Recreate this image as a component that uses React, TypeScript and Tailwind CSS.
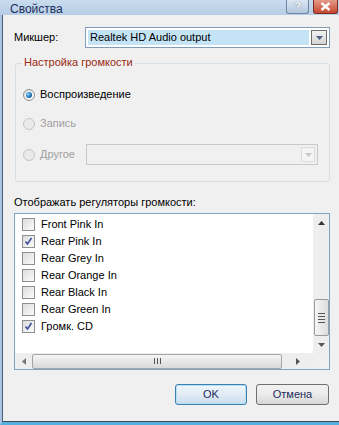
import React from 'react';

const items = [
  { label: 'Front Pink In', checked: false },
  { label: 'Rear Pink In', checked: true },
  { label: 'Rear Grey In', checked: false },
  { label: 'Rear Orange In', checked: false },
  { label: 'Rear Black In', checked: false },
  { label: 'Rear Green In', checked: false },
  { label: 'Громк. CD', checked: true },
];

function Arrow({ dir, color = '#4d6185' }: { dir: 'up' | 'down' | 'left' | 'right'; color?: string }) {
  const pts = {
    down: '0,0 7,0 3.5,4',
    up: '0,4 7,4 3.5,0',
    left: '4,0 4,7 0,3.5',
    right: '0,0 0,7 4,3.5',
  }[dir];
  const w = dir === 'up' || dir === 'down' ? 7 : 4;
  const h = dir === 'up' || dir === 'down' ? 4 : 7;
  return (
    <svg width={w} height={h} viewBox={`0 0 ${w} ${h}`}>
      <polygon points={pts} fill={color} />
    </svg>
  );
}

function Radio({ checked, disabled, label }: { checked?: boolean; disabled?: boolean; label: string }) {
  return (
    <div className="flex items-center gap-[5px] h-[13px]">
      <div
        className={`w-[12px] h-[12px] rounded-full border flex items-center justify-center ${
          disabled ? 'border-[#c5c5c5] bg-[#eaeaea]' : 'border-[#8e8f8f] bg-gradient-to-br from-[#e0e0e0] to-[#ffffff]'
        }`}
      >
        {checked && (
          <div className="w-[6px] h-[6px] rounded-full bg-[radial-gradient(circle_at_35%_35%,#8fd3ff,#1a6fb0_60%,#0d3e6c)]" />
        )}
      </div>
      <span className={disabled ? 'text-[#a0a0a0]' : 'text-black'}>{label}</span>
    </div>
  );
}

function Check({ checked }: { checked: boolean }) {
  return (
    <div className="w-[13px] h-[13px] border border-[#8e8f8f] bg-gradient-to-br from-[#dcdcdc] to-[#fbfbfb] flex items-center justify-center">
      {checked && (
        <svg width="9" height="9" viewBox="0 0 9 9">
          <path d="M1.5 4.5 L3.5 7 L7.5 1" stroke="#3c4fa0" strokeWidth="1.6" fill="none" />
        </svg>
      )}
    </div>
  );
}

export default function App() {
  return (
    <div
      className="w-[339px] h-[425px] bg-[#f0f0f0] flex flex-col text-[11px] leading-none overflow-hidden"
      style={{ fontFamily: '"Liberation Sans", Arial, sans-serif' }}
    >
      {/* Title bar */}
      <div className="h-[15px] bg-gradient-to-b from-[#c9dcef] to-[#b6cde6] flex items-start shrink-0">
        <span className="pl-[10px] pt-[3px] text-[12px] text-[#1d2f5a]">Свойства</span>
        <div className="ml-auto flex gap-[4px] mr-[1px]">
          <div className="w-[23px] h-[14px] rounded-b-[3px] border border-t-0 border-[#6e84a3] bg-gradient-to-b from-[#dbe6f2] to-[#b3c7de] flex items-center justify-center text-[11px] font-bold text-white [text-shadow:0_0_1px_#3b4f6e]">
            ?
          </div>
          <div className="w-[25px] h-[14px] rounded-b-[3px] border border-t-0 border-[#7a2a20] bg-gradient-to-b from-[#e49a88] to-[#c4452e] flex items-center justify-center">
            <svg width="11" height="9" viewBox="0 0 11 9">
              <path d="M1.5 1 L9.5 8 M9.5 1 L1.5 8" stroke="#ffffff" strokeWidth="2.4" />
            </svg>
          </div>
        </div>
      </div>

      {/* Body */}
      <div className="flex-1 flex border-l-[2px] border-[#a9c4e0] border-b-[3px] border-b-[#56b0de]">
        <div className="flex-1 flex flex-col border-l border-[#4a5f77] border-b border-b-[#3a4b5c] pl-[11px] pr-[9px]">
          {/* Mixer row */}
          <div className="flex items-center mt-[12px] h-[21px]">
            <span className="w-[71px]">Микшер:</span>
            <div className="flex-1 h-[21px] border border-[#7f9db9] bg-white flex items-stretch p-[2px] gap-[2px]">
              <div className="flex-1 bg-[#c4e4f6] flex items-center pl-[2px] text-black">Realtek HD Audio output</div>
              <div className="w-[16px] border border-[#6c6c6c] bg-gradient-to-b from-[#f2f2f2] to-[#d4d4d4] flex items-center justify-center">
                <Arrow dir="down" />
              </div>
            </div>
          </div>

          {/* Group box */}
          <div className="relative mt-[15px] ml-[1px] h-[119px] border border-[#d5dfe5] rounded-[3px] pl-[7px] pt-[24px]">
            <span className="absolute left-[6px] top-[-7px] px-[2px] bg-[#f0f0f0] text-[#9b2a12]">Настройка громкости</span>
            <div className="flex flex-col">
              <Radio checked label="Воспроизведение" />
              <div className="mt-[16px]">
                <Radio disabled label="Запись" />
              </div>
              <div className="mt-[14px] flex items-center h-[21px]">
                <div className="w-[63px]">
                  <Radio disabled label="Другое" />
                </div>
                <div className="w-[232px] h-[21px] border border-[#c9c9c9] bg-[#f0f0f0] flex justify-end p-[2px]">
                  <div className="w-[14px] border border-[#dcdcdc] bg-[#f4f4f4] flex items-center justify-center">
                    <Arrow dir="down" color="#c8c8c8" />
                  </div>
                </div>
              </div>
            </div>
          </div>

          <div className="mt-[15px]">Отображать регуляторы громкости:</div>

          {/* List box */}
          <div className="mt-[5px] h-[157px] border border-[#82a4c4] bg-white flex flex-col">
            <div className="flex-1 flex min-h-0">
              <div className="flex-1 flex flex-col pl-[7px] pt-[2px]">
                {items.map((it) => (
                  <div key={it.label} className="h-[17px] flex items-center gap-[6px]">
                    <Check checked={it.checked} />
                    <span className="text-black">{it.label}</span>
                  </div>
                ))}
              </div>
              {/* Vertical scrollbar */}
              <div className="w-[16px] bg-[#eeeeee] flex flex-col items-center">
                <div className="h-[17px] flex items-center justify-center">
                  <Arrow dir="up" color="#333333" />
                </div>
                <div className="flex-1" />
                <div className="w-[15px] h-[37px] border border-[#9a9a9a] rounded-[2px] bg-gradient-to-r from-[#f5f5f5] to-[#dddddd] flex flex-col items-center justify-center gap-[2px]">
                  <div className="w-[7px] h-[1px] bg-[#555]" />
                  <div className="w-[7px] h-[1px] bg-[#555]" />
                  <div className="w-[7px] h-[1px] bg-[#555]" />
                  <div className="w-[7px] h-[1px] bg-[#555]" />
                </div>
                <div className="h-[17px] flex items-center justify-center">
                  <Arrow dir="down" color="#555555" />
                </div>
              </div>
            </div>
            {/* Horizontal scrollbar */}
            <div className="h-[16px] flex bg-[#eeeeee]">
              <div className="flex-1 flex items-center">
                <div className="w-[17px] flex justify-center">
                  <Arrow dir="left" color="#777777" />
                </div>
                <div className="w-[250px] h-[15px] border border-[#a5a5a5] rounded-[2px] bg-gradient-to-b from-[#f5f5f5] to-[#dadada] flex items-center justify-center gap-[2px]">
                  <div className="w-[1px] h-[6px] bg-[#555]" />
                  <div className="w-[1px] h-[6px] bg-[#555]" />
                  <div className="w-[1px] h-[6px] bg-[#555]" />
                </div>
                <div className="flex-1 flex justify-center">
                  <Arrow dir="right" color="#555555" />
                </div>
              </div>
              <div className="w-[16px] bg-[#f0f0f0]" />
            </div>
          </div>

          {/* Buttons */}
          <div className="mt-[14px] flex justify-end gap-[9px] pr-[1px]">
            <div className="w-[72px] h-[21px] border border-[#3c7fb1] rounded-[3px] bg-gradient-to-b from-[#f0f6fb] via-[#e1ecf5] to-[#c9dcec] flex items-center justify-center text-[#1b2b5c] shadow-[inset_0_0_0_1px_#b7e0f6]">
              OK
            </div>
            <div className="w-[73px] h-[21px] border border-[#707070] rounded-[3px] bg-gradient-to-b from-[#f2f2f2] via-[#ebebeb] to-[#d6d6d6] flex items-center justify-center text-[#1b2b5c]">
              Отмена
            </div>
          </div>
        </div>
      </div>
    </div>
  );
}
